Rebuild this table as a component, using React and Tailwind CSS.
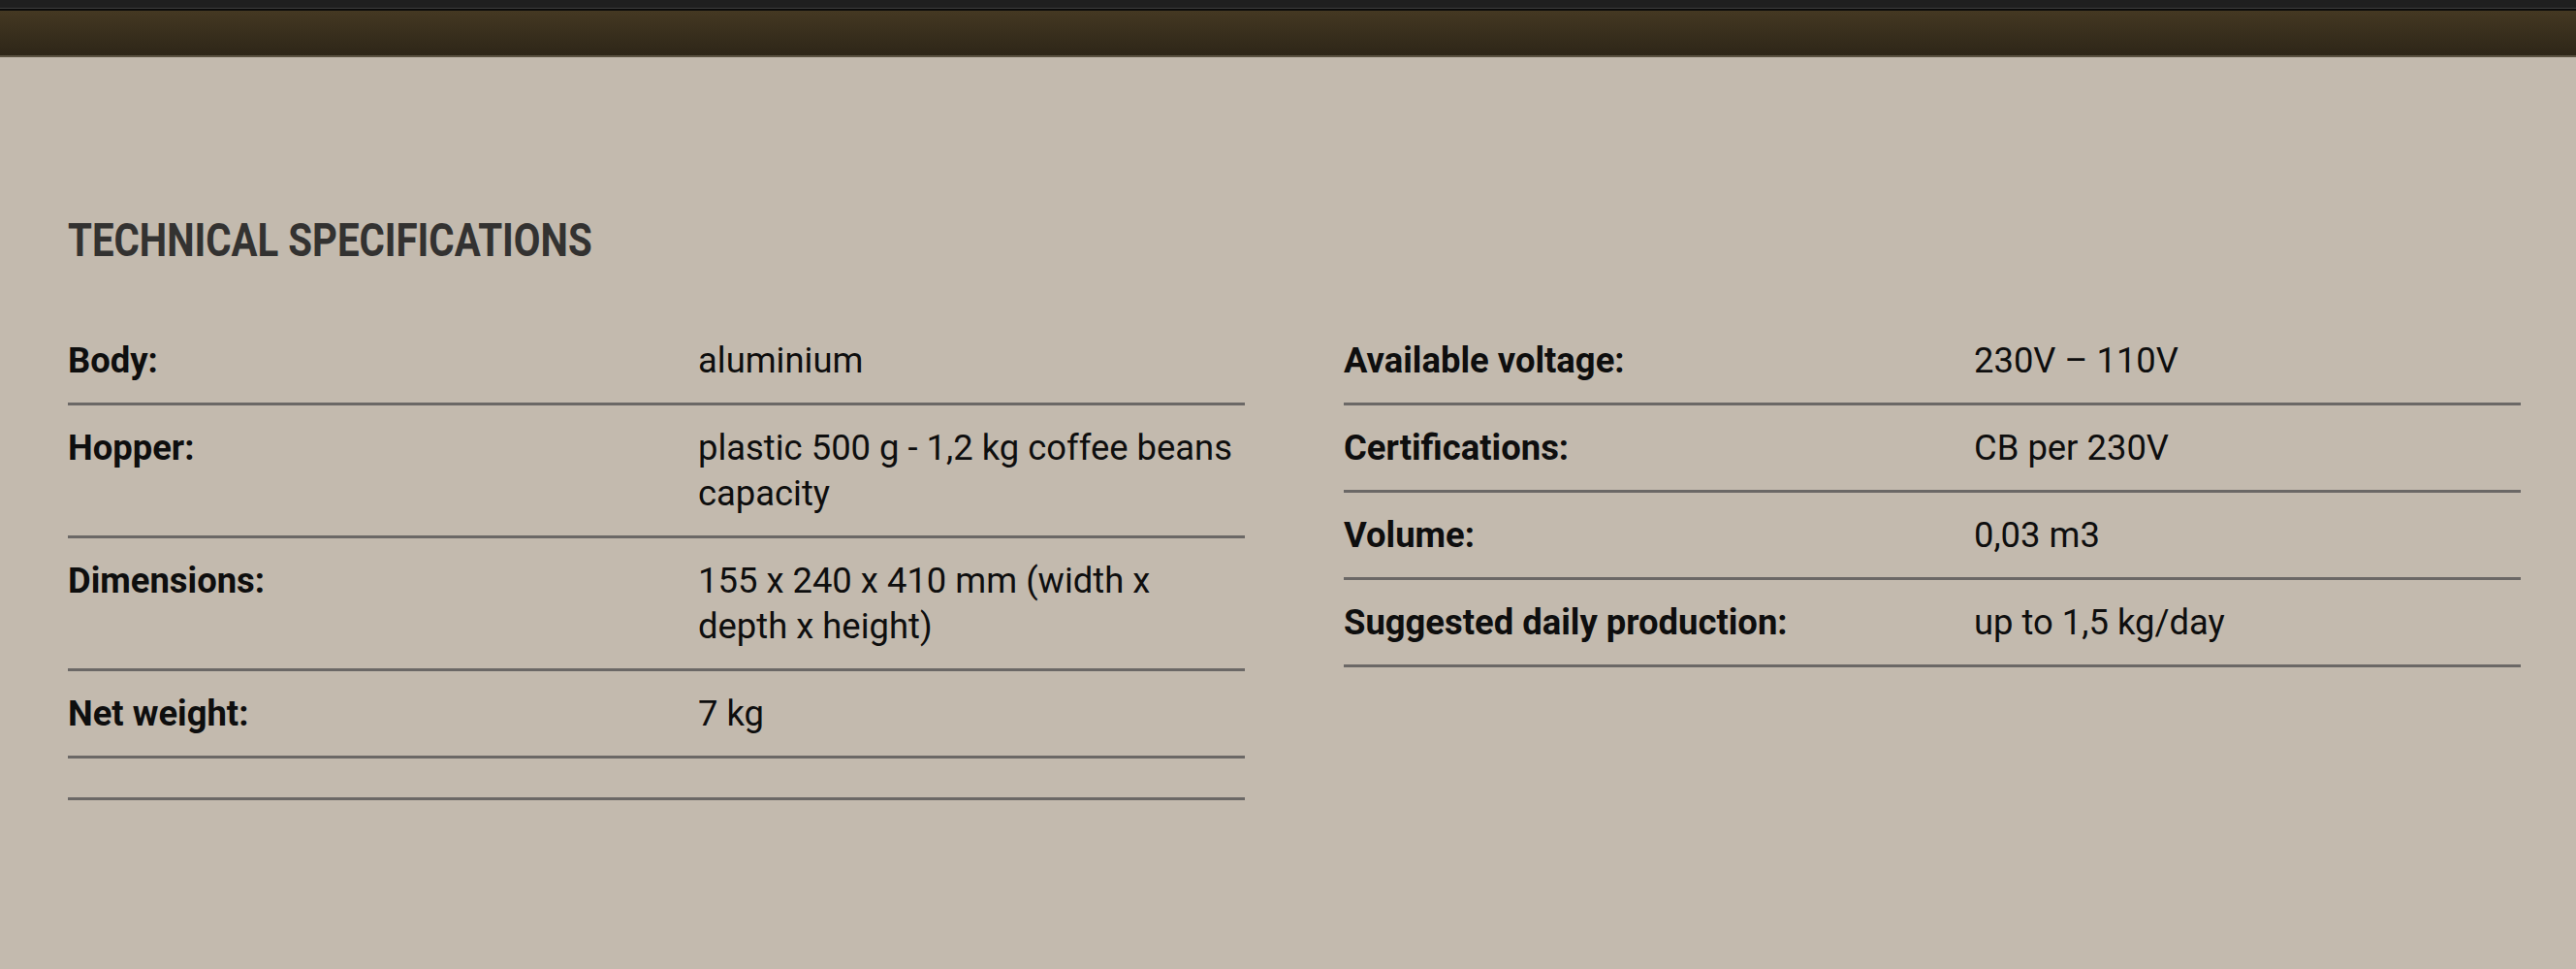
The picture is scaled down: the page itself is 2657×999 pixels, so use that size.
import React from 'react';

const leftSpecs = [
  { label: 'Body:', value: ['aluminium'] },
  { label: 'Hopper:', value: ['plastic 500 g - 1,2 kg coffee beans', 'capacity'] },
  { label: 'Dimensions:', value: ['155 x 240 x 410 mm (width x', 'depth x height)'] },
  { label: 'Net weight:', value: ['7 kg'] },
  { label: '', value: [] },
];

const rightSpecs = [
  { label: 'Available voltage:', value: ['230V – 110V'] },
  { label: 'Certifications:', value: ['CB per 230V'] },
  { label: 'Volume:', value: ['0,03 m3'] },
  { label: 'Suggested daily production:', value: ['up to 1,5 kg/day'] },
];

function SpecRow({ label, value }) {
  return (
    <div className="flex py-[20px] border-b-[3px] border-[#6b6866] text-[36.4px] leading-[47px] text-[#0e0e0e]">
      <div className="w-[650px] shrink-0 font-bold">{label}</div>
      <div className="flex-1 font-normal whitespace-nowrap">
        {value.map((line, i) => (
          <div key={i}>{line}</div>
        ))}
      </div>
    </div>
  );
}

export default function App() {
  return (
    <div
      className="min-h-screen bg-[#c3baae]"
      style={{ fontFamily: 'Roboto, "Liberation Sans", sans-serif' }}
    >
      {/* top bar */}
      <div className="h-[8px] bg-[#1f1f1f]" />
      <div className="h-[1px] bg-[#3d3d3d]" />
      <div className="h-[2px] bg-[#0b0b0b]" />
      <div className="h-[46px] bg-gradient-to-b from-[#443822] to-[#2e2618]" />
      <div className="h-[2px] bg-[#5b5242]" />

      <div className="pl-[70px] pt-[164px] pb-[120px]">
        <h2 className="text-[49px] leading-[49px] font-bold text-[#333231] uppercase origin-left scale-x-[0.82] mb-[56px] whitespace-nowrap">
          Technical Specifications
        </h2>

        <div className="flex gap-[102px]">
          <div className="w-[1214px] shrink-0 flex flex-col">
            {leftSpecs.map((s, i) => (
              <SpecRow key={i} label={s.label} value={s.value} />
            ))}
          </div>
          <div className="w-[1214px] shrink-0 flex flex-col">
            {rightSpecs.map((s, i) => (
              <SpecRow key={i} label={s.label} value={s.value} />
            ))}
          </div>
        </div>
      </div>
    </div>
  );
}
